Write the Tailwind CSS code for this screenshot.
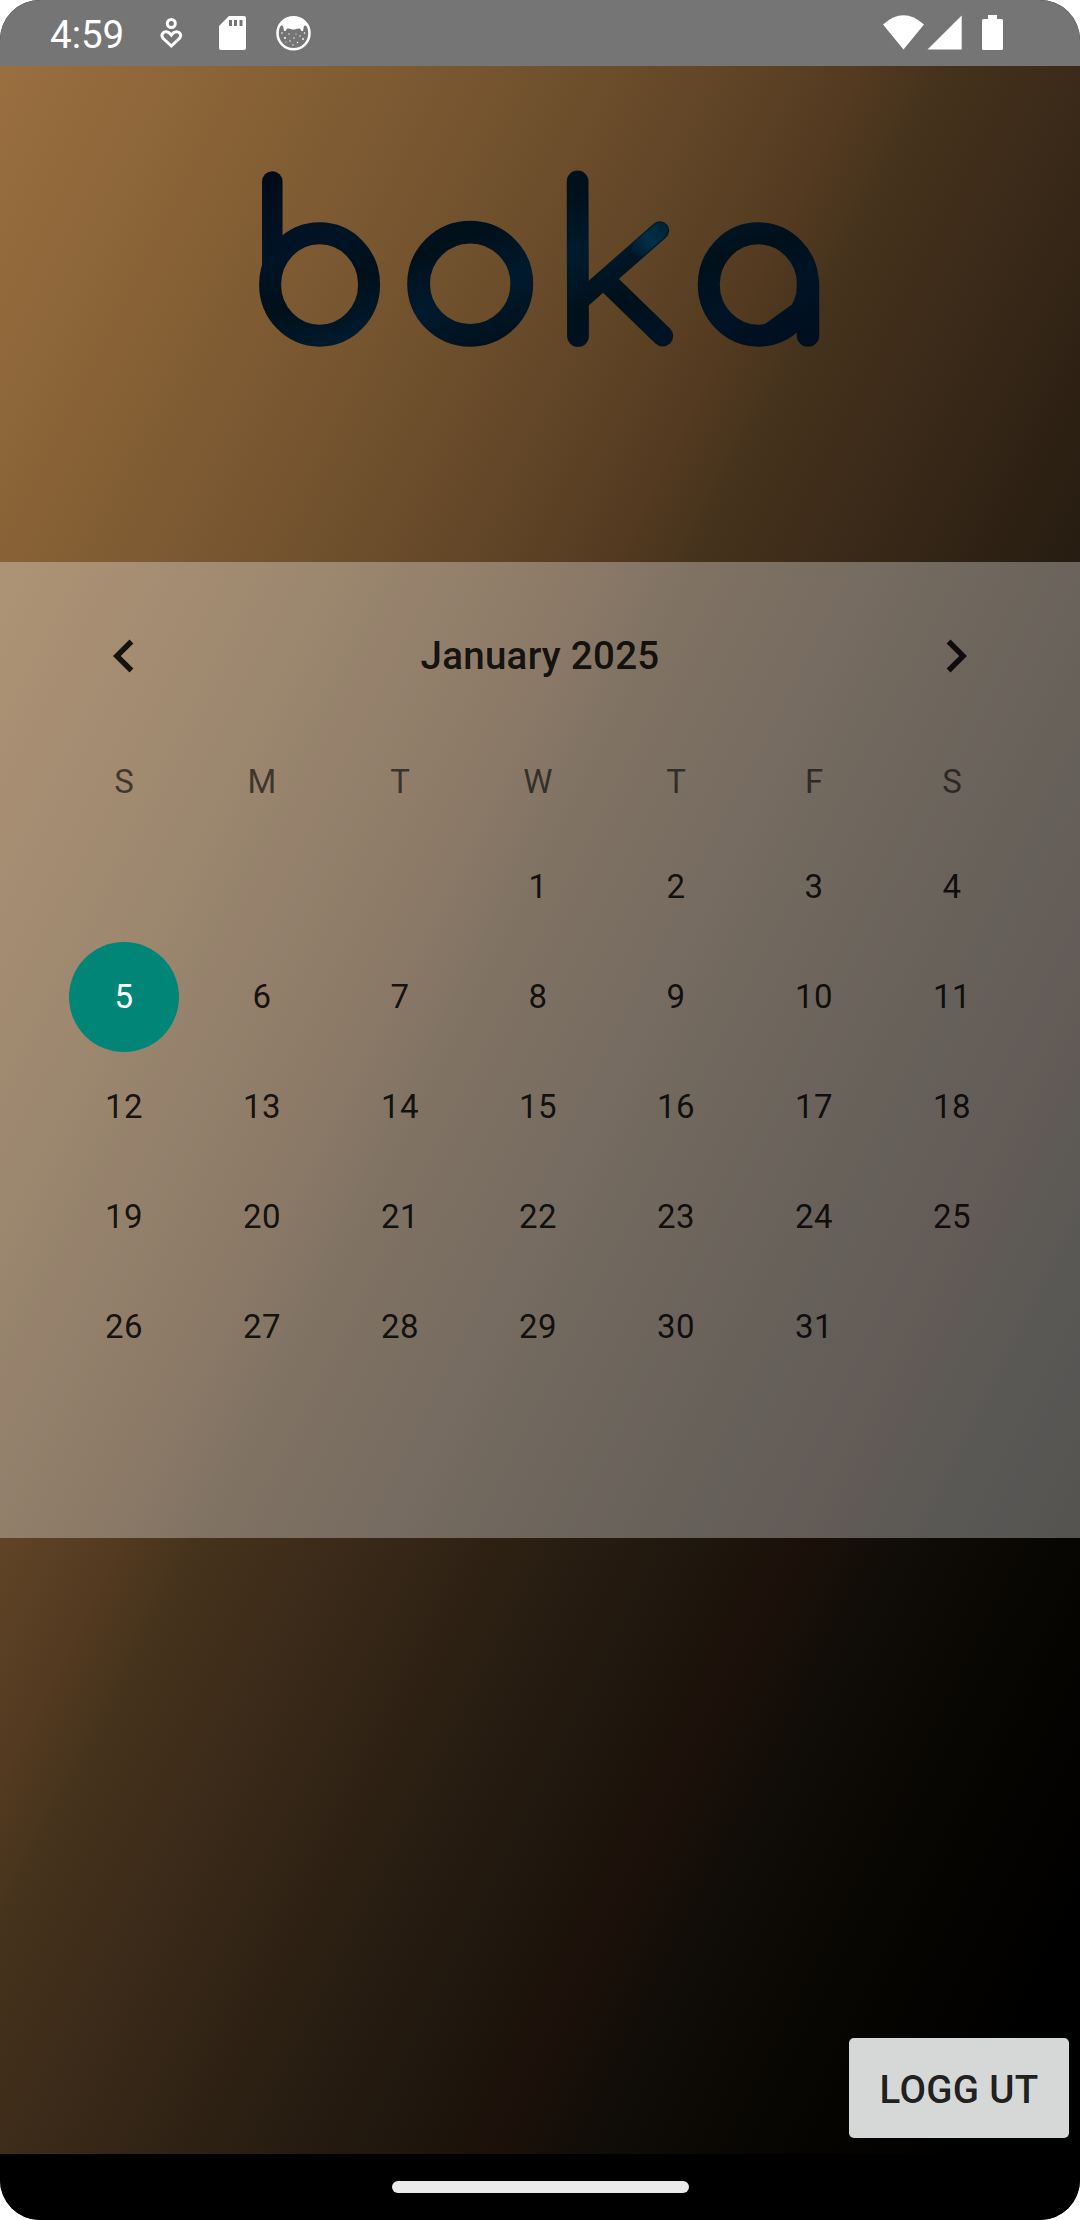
<!DOCTYPE html>
<html lang="sv">
<head>
<meta charset="utf-8">
<title>boka</title>
<script src="https://cdn.jsdelivr.net/npm/@tailwindcss/browser@4"></script>
</head>
<body class="bg-white font-[Roboto,sans-serif]">
<div class="flex flex-col w-[1080px] h-[2220px] overflow-hidden rounded-[40px] bg-black">

  <!-- Status bar -->
  <header class="flex h-[66px] shrink-0 items-center bg-[#757575] pl-[50px] text-white">
    <span class="w-[110px] text-[38.5px] leading-[66px] pt-[3px]">4:59</span>
    <svg class="w-[24px] h-[66px] shrink-0" viewBox="160 0 24 66" fill="none" stroke="#fff" stroke-width="3">
      <circle cx="171.300" cy="23.500" r="4"/>
      <path d="M171.300 46L163.300 38.500C160.300 35 163 31.600 166.200 31.800C168.500 32 170 33.300 171.300 35C172.600 33.300 174.100 32 176.400 31.800C179.600 31.600 182.300 35 179.300 38.500Z"/>
    </svg>
    <svg class="ml-[35px] w-[27px] h-[66px] shrink-0" viewBox="219 0 27 66">
      <path fill="#fff" d="M229 16H244Q246 16 246 18V48Q246 50 244 50H221Q219 50 219 48V26Z"/>
      <path fill="#757575" d="M229 20h3v6h-3zM234 20h3v6h-3zM239.500 20h3v6h-3z"/>
    </svg>
    <svg class="ml-[29px] w-[37px] h-[66px] shrink-0" viewBox="275 0 37 66">
      <circle cx="293.500" cy="33.200" r="16" fill="none" stroke="#fff" stroke-width="2.500"/>
      <path fill="#fff" d="M280 25C283 20 288 17.500 293.500 17.500S304 20 307 25L304 26L303 31L301.500 31L300 28.500C297 28 296 29.500 293.500 29.500S290 28 287 28.500L285.500 31L284 31L283 26Z"/>
      <g fill="#fff">
        <circle cx="285" cy="38" r="1"/><circle cx="289" cy="34" r=".7"/><circle cx="290" cy="41" r=".7"/><circle cx="286" cy="42" r=".6"/><circle cx="294" cy="38" r=".7"/><circle cx="297.500" cy="42.500" r=".7"/><circle cx="300" cy="36" r=".7"/><circle cx="303" cy="39" r=".9"/><circle cx="296" cy="34" r=".6"/><circle cx="304.500" cy="33" r=".8"/><circle cx="282" cy="33" r=".8"/><circle cx="293" cy="45" r=".7"/>
      </g>
    </svg>
    <svg class="ml-auto mr-[76px] w-[122px] h-[66px] shrink-0" viewBox="882 0 122 66" fill="#fff">
      <path d="M883 24.500Q903.500 6 924 24.500L903.500 49.500Z"/>
      <path d="M927.500 49.500L961.700 15.500V49.500Z"/>
      <path d="M988 15H997V19H1001.500Q1003 19 1003 20.500V48.500Q1003 50 1001.500 50H983.500Q982 50 982 48.500V20.500Q982 19 983.500 19H988Z"/>
    </svg>
  </header>

  <main class="flex flex-col h-[2088px] shrink-0 bg-[linear-gradient(116.700deg,#996f40_0%,#886236_12%,#6f502d_27%,#5d4225_36%,#533a20_40.500%,#45321c_44.500%,#3b2a19_51%,#2c2013_59%,#20170e_67%,#1a1009_73%,#0f0c07_78%,#060401_87%,#000000_95%)]">
    <!-- Logo -->
    <div class="flex h-[496px] shrink-0 items-start justify-center pt-[94px]">
      <svg role="img" aria-label="boka" class="w-[580px] h-[200px]" viewBox="250 160 580 200" fill="none" stroke="url(#ink)" stroke-width="22" stroke-linecap="round">
        <defs>
          <linearGradient id="ink" gradientUnits="userSpaceOnUse" x1="260" y1="170" x2="330" y2="350" spreadMethod="reflect">
            <stop offset="0" stop-color="#000a18"/>
            <stop offset=".45" stop-color="#001426"/>
            <stop offset=".7" stop-color="#00101a"/>
            <stop offset="1" stop-color="#001a2e"/>
          </linearGradient>
          <linearGradient id="tip" gradientUnits="userSpaceOnUse" x1="630" y1="257" x2="664" y2="228">
            <stop offset="0" stop-color="#00304a" stop-opacity="0"/>
            <stop offset=".6" stop-color="#003048"/>
            <stop offset="1" stop-color="#002436"/>
          </linearGradient>
        </defs>
        <line x1="272.300" y1="181.500" x2="272.300" y2="270" stroke-width="20.500"/>
        <ellipse cx="319.600" cy="284.500" rx="49.500" ry="51.200"/>
        <ellipse cx="470.200" cy="283.700" rx="51.600" ry="51.600" stroke-width="22.800"/>
        <line x1="577.600" y1="181.500" x2="578" y2="336" stroke-width="21.800"/>
        <line x1="582" y1="299" x2="660" y2="230.500" stroke-width="18.500"/>
        <line x1="640" y1="248" x2="660" y2="230.500" stroke="url(#tip)" stroke-width="16"/>
        <line x1="606" y1="281" x2="662.700" y2="336" stroke-width="21"/>
        <ellipse cx="758.400" cy="284.500" rx="49.600" ry="51.200"/>
        <line x1="808" y1="284" x2="808" y2="335.500" stroke-width="22.500"/>
        <line x1="768" y1="334" x2="797" y2="313" stroke-width="20" stroke-linecap="butt"/>
      </svg>
    </div>

    <!-- Calendar -->
    <section class="flex flex-col h-[976px] shrink-0 bg-white/[.314] text-black/87">
      <div class="flex h-[188px] items-center justify-between px-[91px]">
        <svg class="size-[66px]" viewBox="0 0 24 24" fill="currentColor"><path d="M15.410 7.410L14 6l-6 6 6 6 1.410-1.410L10.830 12z"/></svg>
        <h1 class="text-[38.5px] font-medium leading-none tracking-[.27px]">January 2025</h1>
        <svg class="size-[66px]" viewBox="0 0 24 24" fill="currentColor"><path d="M10 6L8.590 7.410 13.170 12l-4.580 4.590L10 18l6-6z"/></svg>
      </div>
      <div class="grid grid-cols-[repeat(7,138px)] auto-rows-[110px] ml-[55px] w-[966px] -mt-[23px] text-[33px] text-center leading-[110px] text-black/60">
        <span>S</span><span>M</span><span>T</span><span>W</span><span>T</span><span>F</span><span>S</span>
      </div>
      <div class="grid grid-cols-[repeat(7,138px)] auto-rows-[110px] ml-[55px] w-[966px] -mt-[5px] text-[33px] text-center leading-[110px] tracking-[.4px]">
        <span class="col-start-4">1</span><span>2</span><span>3</span><span>4</span>
        <span class="mx-auto size-[110px] rounded-full bg-[#008577] text-white">5</span><span>6</span><span>7</span><span>8</span><span>9</span><span>10</span><span>11</span>
        <span>12</span><span>13</span><span>14</span><span>15</span><span>16</span><span>17</span><span>18</span>
        <span>19</span><span>20</span><span>21</span><span>22</span><span>23</span><span>24</span><span>25</span>
        <span>26</span><span>27</span><span>28</span><span>29</span><span>30</span><span>31</span>
      </div>
    </section>

    <div class="mt-auto flex justify-end pr-[11px] pb-[16px]">
      <button class="h-[100px] w-[220px] rounded-[5px] bg-[#d6d7d7] pt-[4px] text-[38.5px] font-medium leading-none tracking-[.3px] text-black/87">LOGG UT</button>
    </div>
  </main>

  <!-- Gesture navigation -->
  <footer class="flex h-[66px] shrink-0 items-center justify-center bg-black">
    <div class="h-[12px] w-[297px] rounded-full bg-[#ebebeb]"></div>
  </footer>
</div>
</body>
</html>
